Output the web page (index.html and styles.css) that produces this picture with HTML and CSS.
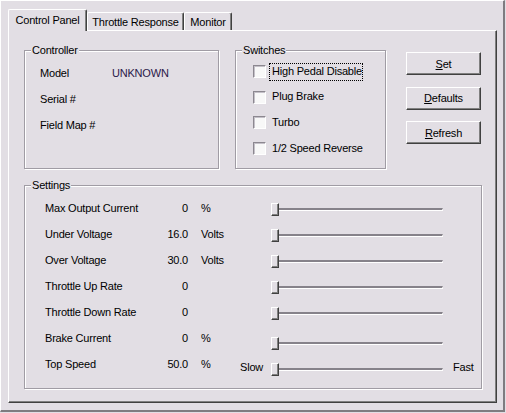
FILE: index.html
```html
<!DOCTYPE html>
<html lang="en">
<head>
    <meta charset="UTF-8">
    <meta name="viewport" content="width=device-width, initial-scale=1.0">
    <title>Controller Setup</title>
    <link rel="stylesheet" href="styles.css">
</head>
<body>
    <div class="window">
        <div class="tabs">
            <div class="tab tab-active">Control Panel</div>
            <div class="tab tab-throttle">Throttle Response</div>
            <div class="tab tab-monitor">Monitor</div>
        </div>

        <div class="panel">
            <div class="top-row">
                <fieldset class="group controller">
                    <legend>Controller</legend>
                    <div class="group-body">
                        <div class="info-row"><span class="info-label">Model</span><span class="info-value">UNKNOWN</span></div>
                        <div class="info-row"><span class="info-label">Serial #</span><span class="info-value"></span></div>
                        <div class="info-row"><span class="info-label">Field Map #</span><span class="info-value"></span></div>
                    </div>
                </fieldset>

                <fieldset class="group switches">
                    <legend>Switches</legend>
                    <div class="group-body">
                        <label class="check"><span class="box"></span><span class="check-text focused">High Pedal Disable</span></label>
                        <label class="check"><span class="box"></span><span class="check-text">Plug Brake</span></label>
                        <label class="check"><span class="box"></span><span class="check-text">Turbo</span></label>
                        <label class="check"><span class="box"></span><span class="check-text">1/2 Speed Reverse</span></label>
                    </div>
                </fieldset>

                <div class="buttons">
                    <button class="btn"><u>S</u>et</button>
                    <button class="btn"><u>D</u>efaults</button>
                    <button class="btn"><u>R</u>efresh</button>
                </div>
            </div>

            <fieldset class="group settings">
                <legend>Settings</legend>
                <div class="group-body settings-grid">
                    <span class="s-label">Max Output Current</span><span class="s-value">0</span><span class="s-unit">%</span><span class="s-slow"></span>
                    <div class="slider"><span class="thumb"></span><span class="track"></span></div><span class="s-fast"></span>

                    <span class="s-label">Under Voltage</span><span class="s-value">16.0</span><span class="s-unit">Volts</span><span class="s-slow"></span>
                    <div class="slider"><span class="thumb"></span><span class="track"></span></div><span class="s-fast"></span>

                    <span class="s-label">Over Voltage</span><span class="s-value">30.0</span><span class="s-unit">Volts</span><span class="s-slow"></span>
                    <div class="slider"><span class="thumb"></span><span class="track"></span></div><span class="s-fast"></span>

                    <span class="s-label">Throttle Up Rate</span><span class="s-value">0</span><span class="s-unit"></span><span class="s-slow"></span>
                    <div class="slider"><span class="thumb"></span><span class="track"></span></div><span class="s-fast"></span>

                    <span class="s-label">Throttle Down Rate</span><span class="s-value">0</span><span class="s-unit"></span><span class="s-slow"></span>
                    <div class="slider"><span class="thumb"></span><span class="track"></span></div><span class="s-fast"></span>

                    <span class="s-label">Brake Current</span><span class="s-value">0</span><span class="s-unit">%</span><span class="s-slow"></span>
                    <div class="slider slider-low"><span class="thumb"></span><span class="track"></span></div><span class="s-fast"></span>

                    <span class="s-label">Top Speed</span><span class="s-value">50.0</span><span class="s-unit">%</span><span class="s-slow">Slow</span>
                    <div class="slider slider-low"><span class="thumb"></span><span class="track"></span></div><span class="s-fast">Fast</span>
                </div>
            </fieldset>
        </div>
    </div>
</body>
</html>
```

FILE: styles.css
```css
body {
    margin: 0;
    background: #e2dee4;
    font-family: 'Liberation Sans', Arial, sans-serif;
    font-size: 11px;
    letter-spacing: -0.2px;
    color: #000;
}

.window {
    width: 505px;
    height: 412px;
    box-sizing: border-box;
    border-top: 1px solid #fff;
    border-left: 1px solid #fff;
    border-right: 2px solid #7e7c80;
    border-bottom: 2px solid #7e7c80;
    padding: 8px 0 0 7px;
}

/* tab strip */
.tabs {
    display: flex;
    align-items: flex-end;
    height: 22px;
    position: relative;
    z-index: 1;
}

.tab {
    box-sizing: border-box;
    height: 18px;
    margin-bottom: 1px;
    padding-top: 3px;
    line-height: 13px;
    text-align: center;
    border-top: 1px solid #fff;
    border-left: 1px solid #fff;
    border-right: 1px solid #404040;
    box-shadow: inset -1px 0 0 #808080;
    border-radius: 2px 2px 0 0;
    background: #e2dee4;
}

.tab-active {
    width: 79px;
    height: 22px;
    margin-bottom: 0;
    padding-top: 4px;
}

.tab-throttle {
    width: 97px;
}

.tab-monitor {
    width: 48px;
}

/* page body under the tabs */
.panel {
    box-sizing: border-box;
    width: 489px;
    height: 373px;
    margin-top: -1px;
    border-top: 1px solid #fff;
    border-left: 1px solid #fff;
    border-right: 1px solid #404040;
    border-bottom: 1px solid #404040;
    box-shadow: inset -1px -1px 0 #808080;
    padding: 13px 0 0 15px;
}

.top-row {
    display: flex;
    align-items: flex-start;
}

.group {
    margin: 0;
    padding: 0;
    min-width: 0;
    box-sizing: border-box;
    border: 1px solid #a09ca4;
    box-shadow: 1px 1px 0 #fff, inset 1px 1px 0 #fff;
}

.group legend {
    margin-left: 6px;
    padding: 0 1px;
    line-height: 13px;
    background: #e2dee4;
}

/* controller info */
.controller {
    width: 195px;
    height: 125px;
}

.controller .group-body {
    padding: 3px 0 0 15px;
}

.info-row {
    display: flex;
    height: 26px;
    line-height: 26px;
}

.info-label {
    width: 72px;
}

.info-value {
    color: #2a1848;
}

/* switches */
.switches {
    width: 151px;
    height: 125px;
    margin-left: 16px;
}

.switches .group-body {
    padding: 2px 0 0 17px;
}

.check {
    display: flex;
    align-items: center;
    height: 25.6px;
}

.box {
    width: 13px;
    height: 13px;
    box-sizing: border-box;
    background: #f8f8f8;
    border-top: 1px solid #8c8890;
    border-left: 1px solid #8c8890;
    border-right: 1px solid #fff;
    border-bottom: 1px solid #fff;
    box-shadow: inset 1px 1px 0 #c4c0c8;
}

.check-text {
    margin-left: 4px;
    padding: 1px 0 2px 2px;
    line-height: 13px;
}

.focused {
    outline: 1px dotted #000;
    outline-offset: 0;
}

/* buttons */
.buttons {
    display: flex;
    flex-direction: column;
    gap: 11.5px;
    margin: 8px 0 0 20px;
}

.btn {
    width: 75px;
    height: 23px;
    padding: 0;
    font: inherit;
    letter-spacing: inherit;
    color: #000;
    background: #e2dee4;
    border-top: 1px solid #fff;
    border-left: 1px solid #fff;
    border-right: 1px solid #404040;
    border-bottom: 1px solid #404040;
    box-shadow: inset -1px -1px 0 #808080;
}

/* settings */
.settings {
    width: 458px;
    height: 210px;
    margin-top: 10px;
}

.settings-grid {
    display: grid;
    grid-template-columns: 105px 38px 52px 31px 172px auto;
    grid-auto-rows: 26px;
    align-items: center;
    padding: 3px 0 0 20px;
}

.s-value {
    text-align: right;
}

.s-unit {
    padding-left: 13px;
}

.s-slow,
.s-fast {
    padding-top: 6px;
}

.s-fast {
    padding-left: 10px;
}

.slider {
    display: flex;
    align-items: center;
    padding-top: 3px;
}

.slider-low {
    padding-top: 10px;
}

.thumb {
    width: 8px;
    height: 13px;
    box-sizing: border-box;
    background: #e2dee4;
    border-top: 1px solid #fff;
    border-left: 1px solid #fff;
    border-right: 1px solid #404040;
    border-bottom: 1px solid #404040;
    box-shadow: inset -1px -1px 0 #808080;
}

.track {
    width: 165px;
    height: 3px;
    box-sizing: border-box;
    border-top: 2px solid #86828a;
    border-bottom: 1px solid #fff;
    border-right: 1px solid #fff;
}
```
